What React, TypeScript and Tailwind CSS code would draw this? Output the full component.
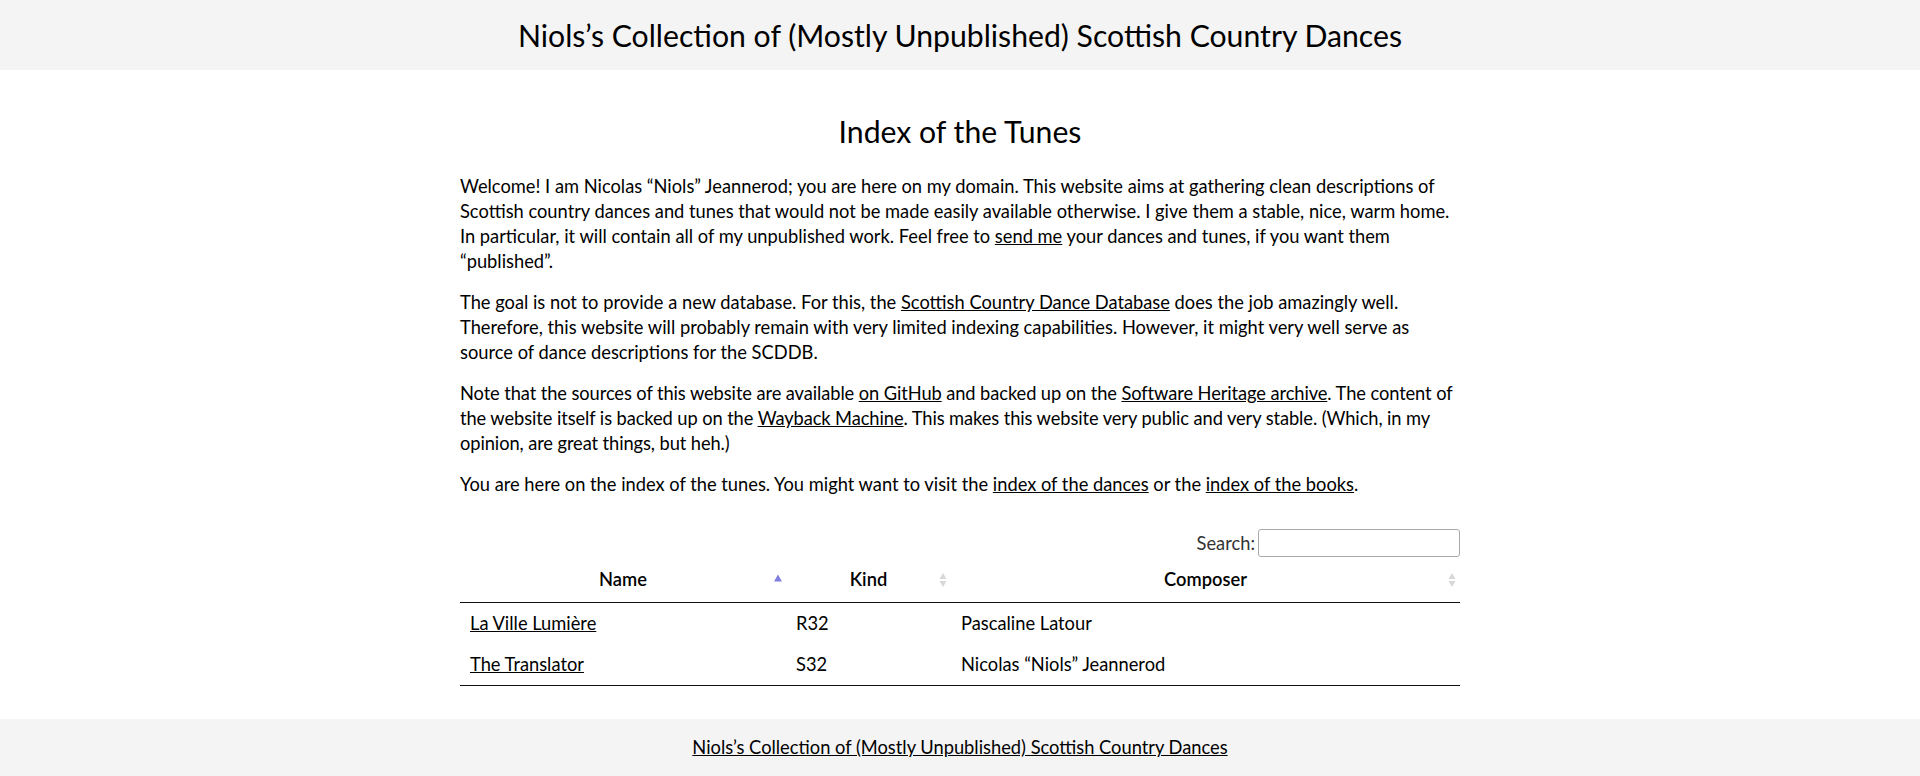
import React from "react";

interface Tune {
  name: string;
  kind: string;
  composer: string;
}

const tunes: Tune[] = [
  { name: "La Ville Lumière", kind: "R32", composer: "Pascaline Latour" },
  { name: "The Translator", kind: "S32", composer: "Nicolas “Niols” Jeannerod" },
];

const font = { fontFamily: "Lato, 'Open Sans', sans-serif" };

function SortIcon({ active }: { active?: boolean }) {
  if (active) {
    return (
      <svg width="10" height="18" viewBox="0 0 10 18" className="absolute right-[3px] top-1/2 -translate-y-1/2">
        <polygon points="5,3.5 9,10.5 1,10.5" fill="#7f7fdf" />
      </svg>
    );
  }
  return (
    <svg width="10" height="18" viewBox="0 0 10 18" className="absolute right-[3px] top-1/2 -translate-y-1/2">
      <polygon points="5,2 8.5,8 1.5,8" fill="#d8d8d8" />
      <polygon points="1.5,10 8.5,10 5,16" fill="#d8d8d8" />
    </svg>
  );
}

export default function App() {
  return (
    <div className="min-h-screen bg-white text-black" style={font}>
      <header className="bg-[#f4f4f4] h-[70px] flex items-center justify-center">
        <h1 className="text-[30.2px] leading-[36px]">
          Niols’s Collection of (Mostly Unpublished) Scottish Country Dances
        </h1>
      </header>

      <main className="w-[1000px] mx-auto pt-[43px] pb-[33px] text-[18.3px] leading-[25px]">
        <h2 className="text-[30.2px] leading-[36px] text-center mb-[25px]">Index of the Tunes</h2>

        <p className="mb-[16px]">
          Welcome! I am Nicolas “Niols” Jeannerod; you are here on my domain. This website aims at gathering clean
          descriptions of Scottish country dances and tunes that would not be made easily available otherwise. I give
          them a stable, nice, warm home. In particular, it will contain all of my unpublished work. Feel free to{" "}
          <a className="underline">send me</a> your dances and tunes, if you want them “published”.
        </p>
        <p className="mb-[16px]">
          The goal is not to provide a new database. For this, the{" "}
          <a className="underline">Scottish Country Dance Database</a> does the job amazingly well. Therefore, this
          website will probably remain with very limited indexing capabilities. However, it might very well serve as
          source of dance descriptions for the SCDDB.
        </p>
        <p className="mb-[16px] tracking-[-0.09px]">
          Note that the sources of this website are available <a className="underline">on GitHub</a> and backed up on
          the <a className="underline">Software Heritage archive</a>. The content of the website itself is backed up on
          the <a className="underline">Wayback Machine</a>. This makes this website very public and very stable.
          (Which, in my opinion, are great things, but heh.)
        </p>
        <p>
          You are here on the index of the tunes. You might want to visit the{" "}
          <a className="underline">index of the dances</a> or the <a className="underline">index of the books</a>.
        </p>

        <div className="flex justify-end items-center mt-[32px] h-[28px]">
          <label className="text-[#333] mr-[3px]">Search:</label>
          <input
            type="text"
            className="w-[202px] h-[28px] border border-[#aaa] rounded-[3px] bg-white outline-none"
          />
        </div>

        <table className="w-full border-collapse table-fixed">
          <colgroup>
            <col className="w-[326px]" />
            <col className="w-[165px]" />
            <col />
          </colgroup>
          <thead>
            <tr className="border-b border-[#111]">
              <th className="relative py-[10px] px-[10px] font-semibold text-center">
                Name
                <SortIcon active />
              </th>
              <th className="relative py-[10px] px-[10px] font-semibold text-center">
                Kind
                <SortIcon />
              </th>
              <th className="relative py-[10px] px-[10px] font-semibold text-center">
                Composer
                <SortIcon />
              </th>
            </tr>
          </thead>
          <tbody className="border-b border-[#111]">
            {tunes.map((tune) => (
              <tr key={tune.name}>
                <td className="py-2 px-[10px]">
                  <a className="underline">{tune.name}</a>
                </td>
                <td className="py-2 px-[10px]">{tune.kind}</td>
                <td className="py-2 px-[10px]">{tune.composer}</td>
              </tr>
            ))}
          </tbody>
        </table>
      </main>

      <footer className="bg-[#f4f4f4] py-[16px] text-center text-[18.3px] leading-[25px]">
        <a className="underline">Niols’s Collection of (Mostly Unpublished) Scottish Country Dances</a>
      </footer>
    </div>
  );
}
